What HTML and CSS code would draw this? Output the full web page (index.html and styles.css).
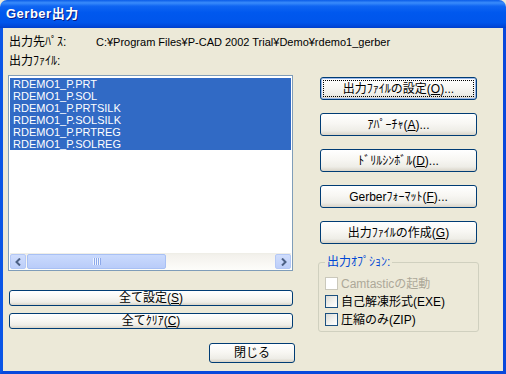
FILE: index.html
```html
<!DOCTYPE html>
<html lang="ja">
<head>
  <meta charset="UTF-8">
  <title>Gerber出力</title>
  <link rel="stylesheet" href="styles.css">
</head>
<body>
  <div class="window">
    <div class="titlebar">
      <span class="title">Gerber出力</span>
    </div>

    <div class="frame">
      <div class="client">
        <div class="path-row">
          <span class="path-label">出力先ﾊﾟｽ:</span>
          <span class="path-value">C:¥Program Files¥P-CAD 2002 Trial¥Demo¥rdemo1_gerber</span>
        </div>
        <div class="files-label">出力ﾌｧｲﾙ:</div>

        <div class="main">
          <div class="left">
            <div class="listbox">
              <ul class="items">
                <li class="selected">RDEMO1_P.PRT</li>
                <li class="selected">RDEMO1_P.SOL</li>
                <li class="selected">RDEMO1_P.PRTSILK</li>
                <li class="selected">RDEMO1_P.SOLSILK</li>
                <li class="selected">RDEMO1_P.PRTREG</li>
                <li class="selected">RDEMO1_P.SOLREG</li>
              </ul>
              <div class="hscroll">
                <div class="arrow">
                  <svg viewBox="0 0 7 8" width="7" height="8"><polyline points="5,0.5 1.5,4 5,7.5" fill="none" stroke="#4D6185" stroke-width="2"/></svg>
                </div>
                <div class="thumb"><span class="grip"></span></div>
                <div class="track"></div>
                <div class="arrow">
                  <svg viewBox="0 0 7 8" width="7" height="8"><polyline points="2,0.5 5.5,4 2,7.5" fill="none" stroke="#4D6185" stroke-width="2"/></svg>
                </div>
              </div>
            </div>

            <button class="btn wide first-wide">全て設定(<u>S</u>)</button>
            <button class="btn wide">全てｸﾘｱ(<u>C</u>)</button>
            <div class="close-row">
              <button class="btn close">閉じる</button>
            </div>
          </div>

          <div class="right">
            <button class="btn action default">出力ﾌｧｲﾙの設定(<u>O</u>)...</button>
            <button class="btn action">ｱﾊﾟｰﾁｬ(<u>A</u>)...</button>
            <button class="btn action">ﾄﾞﾘﾙｼﾝﾎﾞﾙ(<u>D</u>)...</button>
            <button class="btn action">Gerberﾌｫｰﾏｯﾄ(<u>F</u>)...</button>
            <button class="btn action">出力ﾌｧｲﾙの作成(<u>G</u>)</button>

            <fieldset class="options">
              <legend>出力ｵﾌﾟｼｮﾝ:</legend>
              <div class="check disabled"><span class="box"></span>Camtasticの起動</div>
              <div class="check"><span class="box"></span>自己解凍形式(EXE)</div>
              <div class="check"><span class="box"></span>圧縮のみ(ZIP)</div>
            </fieldset>
          </div>
        </div>
      </div>
    </div>
  </div>
</body>
</html>
```

FILE: styles.css
```css
* {
  margin: 0;
  padding: 0;
  box-sizing: border-box;
}

body {
  font-family: "Liberation Sans", "Noto Sans CJK JP", sans-serif;
  font-size: 12px;
  line-height: 12px;
  color: #000;
  background: #ECE9D8;
}

.window {
  width: 506px;
  height: 374px;
  display: flex;
  flex-direction: column;
}

.titlebar {
  height: 28px;
  border-radius: 7px 7px 0 0;
  background: linear-gradient(#0A5CE8 0%, #3A8CFB 10%, #0F65F2 22%, #0058EE 45%, #0055EB 80%, #0049DC 92%, #003FCB 100%);
  display: flex;
  align-items: center;
  padding-left: 6px;
}

.title {
  color: #fff;
  font-weight: bold;
  font-size: 13px;
  line-height: 14px;
  letter-spacing: 0.5px;
  text-shadow: 1px 1px 0 #0A1C84;
}

.frame {
  flex: 1;
  border: 3px solid #0848DC;
  border-top: none;
  border-left-color: #0A55E6;
  display: flex;
}

.client {
  flex: 1;
  background: #ECE9D8;
  padding: 8px 0 0 5px;
}

.path-row {
  display: flex;
  height: 12px;
  padding-left: 1px;
}

.path-label {
  width: 87px;
}

.path-value {
  font-size: 11px;
}

.files-label {
  margin-top: 7px;
  height: 12px;
  padding-left: 1px;
}

.main {
  margin-top: 8px;
  display: flex;
  gap: 25px;
}

.left {
  width: 285px;
  display: flex;
  flex-direction: column;
}

.listbox {
  height: 196px;
  border: 1px solid #7F9DB9;
  background: #fff;
  display: flex;
  flex-direction: column;
  padding: 2px 1px 0 1px;
}

.items {
  list-style: none;
  flex: 1;
}

.items li {
  height: 12px;
  line-height: 12px;
  font-size: 11px;
  padding-left: 3px;
}

.items li.selected {
  background: #316AC5;
  color: #fff;
}

.hscroll {
  height: 17px;
  display: flex;
  padding: 1px 0 1px 0;
  background: linear-gradient(#EEEDE5 0, #F3F1EC 2px, #FDFDFA 100%);
}

.arrow {
  width: 16px;
  border: 1px solid #B4C8F6;
  border-radius: 2px;
  background: linear-gradient(#D0DDFC, #BCCEF9);
  display: flex;
  align-items: center;
  justify-content: center;
}

.thumb {
  width: 139px;
  margin-left: 1px;
  border: 1px solid #A8C0F4;
  border-radius: 2px;
  background: linear-gradient(#CADAFD, #B9CCF9);
  display: flex;
  align-items: center;
  justify-content: center;
}

.grip {
  width: 8px;
  height: 7px;
  background: repeating-linear-gradient(90deg, #EEF4FE 0 1px, #8CA8EA 1px 2px);
}

.track {
  flex: 1;
}

.btn {
  font-family: inherit;
  font-size: 12px;
  line-height: 12px;
  color: #000;
  border: 1px solid #003C74;
  border-radius: 3px;
  background: linear-gradient(#FFFFFF 0%, #F8F7F3 45%, #EEEDE7 80%, #D9D4C8 100%);
  text-align: center;
}

.btn u {
  text-underline-offset: 1px;
}

.wide {
  height: 16px;
  margin-left: 1px;
  width: 284px;
  margin-top: 7px;
}

.first-wide {
  margin-top: 19px;
}

.close-row {
  margin-top: 14px;
  display: flex;
  justify-content: flex-end;
  margin-right: -2px;
}

.close {
  width: 86px;
  height: 20px;
}

.right {
  width: 161px;
  display: flex;
  flex-direction: column;
  padding-top: 2px;
}

.action {
  height: 23px;
  margin: 0 2px 13px 2px;
}

.default {
  box-shadow: inset 0 0 0 1px #9DBAEB;
  outline: 1px dotted #000;
  outline-offset: -4px;
}

.options {
  margin-top: -1px;
  border: 1px solid #D0D0BF;
  border-radius: 3px;
  padding: 9px 0 5px 6px;
  display: flex;
  flex-direction: column;
  gap: 5px;
}

.options legend {
  color: #0046D5;
  padding: 0 2px;
  line-height: 12px;
}

.check {
  display: flex;
  align-items: center;
  height: 13px;
  gap: 3px;
}

.box {
  width: 13px;
  height: 13px;
  border: 1px solid #1C5180;
  background: linear-gradient(135deg, #DCDCD7 0%, #F4F4F1 60%, #FFFFFF 100%);
}

.check.disabled {
  color: #ACA899;
}

.check.disabled .box {
  border-color: #CAC8BB;
  background: #fff;
}
```
